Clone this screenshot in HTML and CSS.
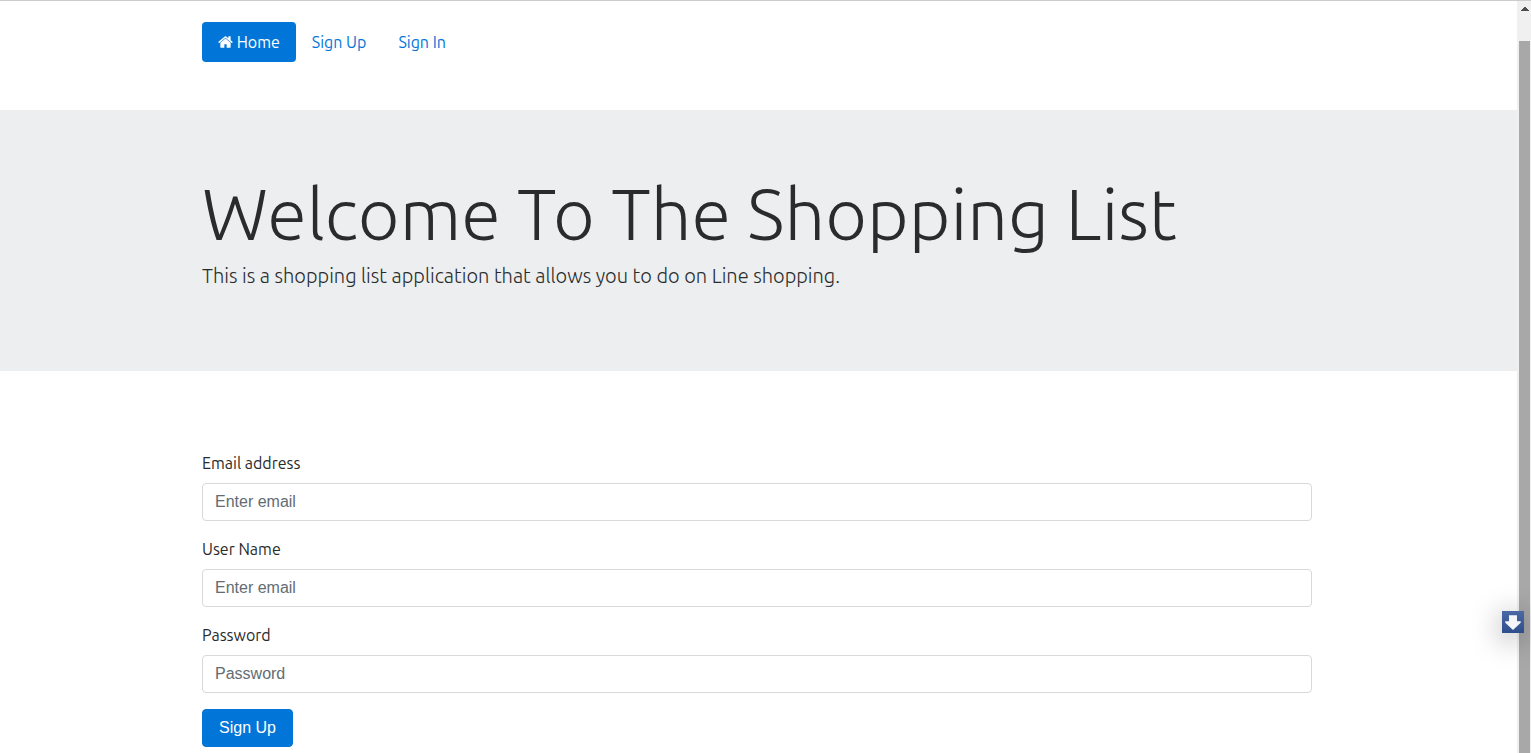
FILE: index.html
```html
<!DOCTYPE html>
<html lang="en">
<head>
<meta charset="utf-8">
<title>Shopping List</title>
<link rel="stylesheet" href="styles.css">
</head>
<body>
<div class="viewport">
  <div class="page">
    <header class="container site-header">
      <nav class="nav">
        <a class="nav-link active" href="#"><svg class="home-icon" viewBox="0 0 1664 1792" aria-hidden="true"><path d="M1408 992v480q0 26-19 45t-45 19H960v-384H704v384H320q-26 0-45-19t-19-45V992q0-1 .5-3t.5-3l575-474 575 474q1 2 1 6zm223-69l-62 74q-8 9-21 11h-3q-13 0-21-7L832 424 140 1001q-12 8-24 7-13-2-21-11l-62-74q-8-10-7-23.500t11-21.500l719-599q32-26 76-26t76 26l244 204V288q0-14 9-23t23-9h192q14 0 23 9t9 23v408l219 182q10 8 11 21.500t-7 23.500z"/></svg> Home</a>
        <a class="nav-link" href="#">Sign Up</a>
        <a class="nav-link" href="#">Sign In</a>
      </nav>
    </header>
    <section class="jumbotron">
      <div class="container">
        <h1 class="title">Welcome To The Shopping List</h1>
        <p class="lead">This is a shopping list application that allows you to do on Line shopping.</p>
      </div>
    </section>
    <main class="container">
      <form class="form">
        <div class="form-group">
          <label for="email">Email address</label>
          <input class="form-control" id="email" type="email" placeholder="Enter email">
        </div>
        <div class="form-group">
          <label for="username">User Name</label>
          <input class="form-control" id="username" type="text" placeholder="Enter email">
        </div>
        <div class="form-group">
          <label for="password">Password</label>
          <input class="form-control" id="password" type="password" placeholder="Password">
        </div>
        <button class="btn" type="button">Sign Up</button>
      </form>
    </main>
  </div>
  <div class="scrollbar" aria-hidden="true">
    <svg class="scroll-arrow" viewBox="0 0 8 4"><path d="M0 4V3h1V2h1V1h1V0h2v1h1v1h1v1h1v1z"/></svg>
    <div class="scroll-thumb"></div>
  </div>
  <button class="scroll-down" type="button" aria-label="Scroll to bottom">
    <svg viewBox="0 0 22 22"><path d="M7 4.300h8v6h3.700v1.400L11 19l-7.700-7.300v-1.400H7z"/></svg>
  </button>
</div>
</body>
</html>
```
FILE: styles.css
```css
* { box-sizing: border-box; }

body {
  margin: 0;
  color: #292b2c;
  background: #fff;
  font-family: Ubuntu, "Noto Sans", sans-serif;
  font-size: 16px;
  line-height: 24px;
}

.viewport {
  position: relative;
  display: flex;
  min-height: 100vh;
  border-top: 1px solid #ccc;
}

.page { flex: 1; min-width: 0; }

.container {
  max-width: 1143px;
  margin: 0 auto;
  padding: 0 18px 0 15px;
}

.site-header { padding-top: 21px; padding-bottom: 48px; }

.nav { display: flex; flex-wrap: wrap; }

.nav-link {
  padding: 8px 16px;
  border-radius: 4px;
  color: #0275d8;
  font-size: 16px;
  text-decoration: none;
}

.nav-link.active { color: #fff; background: #0275d8; }

.home-icon { width: 15px; height: 16px; fill: currentColor; vertical-align: -2px; }

.jumbotron { padding: 64px 0; background: #eceeef; }

.title {
  margin: 0 0 8px;
  font-family: Ubuntu, "Open Sans", sans-serif;
  font-size: 72px;
  font-weight: 300;
  line-height: 79px;
}

.lead {
  margin: 0 0 16px;
  font-family: Ubuntu, "Open Sans", sans-serif;
  font-size: 20px;
  font-weight: 300;
  line-height: 30px;
}

.form { padding: 80px 0 6px; }

.form-group { display: grid; gap: 8px; margin-bottom: 16px; }

.form-control {
  width: 100%;
  height: 38px;
  padding: 6px 12px;
  border: 1px solid #d9d9d9;
  border-radius: 4px;
  background: #fff;
  color: #464a4c;
  font: 16px/24px "Liberation Sans", Arial, sans-serif;
}

.form-control::placeholder { color: #636c72; opacity: 1; }

.btn {
  height: 38px;
  padding: 6px 16px;
  border: 1px solid #0275d8;
  border-radius: 4px;
  color: #fff;
  background: #0275d8;
  font: 16px/24px "Liberation Sans", Arial, sans-serif;
}

.scrollbar {
  display: flex;
  flex-direction: column;
  width: 14px;
  padding: 6px 1px 0 2px;
  background: #f0f0f0;
}

.scroll-arrow { width: 8px; height: 4px; margin: 0 2px 30px; fill: #4d4d4d; }

.scroll-thumb { flex: 1; background: #a8a8a8; }

.scroll-down {
  position: absolute;
  right: 7px;
  bottom: 120px;
  width: 22px;
  height: 22px;
  padding: 0;
  border: 0;
  background: linear-gradient(#4a69a5, #2f4f8c);
  box-shadow: 0 5px 30px rgba(0, 0, 0, 0.4);
}

.scroll-down svg { display: block; fill: #f4f6fa; }
```
